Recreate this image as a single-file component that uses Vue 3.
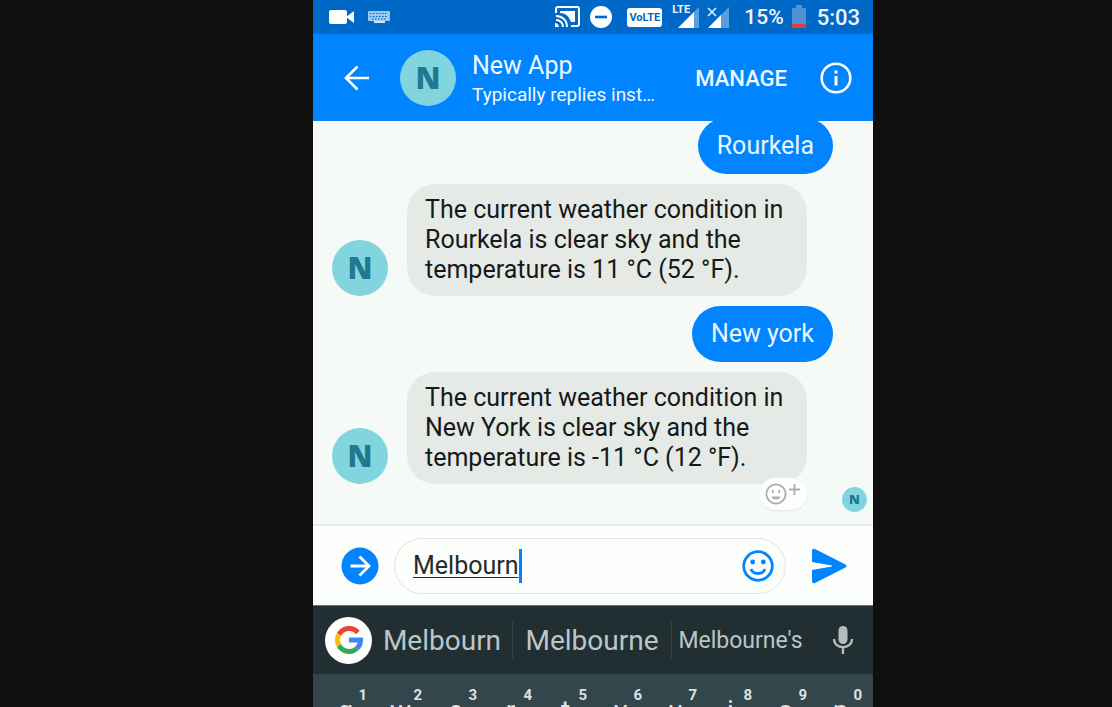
<script setup>
import { ref } from 'vue'

const draft = ref('Melbourn')
const messages = [
  { id: 1, from: 'me', lines: ['Rourkela'] },
  {
    id: 2,
    from: 'bot',
    lines: ['The current weather condition in', 'Rourkela is clear sky and the', 'temperature is 11 °C (52 °F).'],
  },
  { id: 3, from: 'me', lines: ['New york'] },
  {
    id: 4,
    from: 'bot',
    reaction: true,
    lines: ['The current weather condition in', 'New York is clear sky and the', 'temperature is -11 °C (12 °F).'],
  },
]
const keys = ['q1', 'w2', 'e3', 'r4', 't5', 'y6', 'u7', 'i8', 'o9', 'p0']
</script>

<template>
  <div class="stage">
    <main class="phone">
      <div class="status">
        <svg class="video" width="26" height="16" viewBox="0 0 26 16" fill="#fff">
          <rect x="0" y="1" width="18" height="14" rx="2" />
          <path d="M17 8l8-6v12z" />
        </svg>
        <svg class="kbd-icon" width="22" height="14" viewBox="0 0 22 14">
          <rect width="22" height="10" y="1" rx="1" fill="#9cc8ee" />
          <path d="M2 3.500h18M2 6.500h18M4 9h14" stroke="#0069c8" stroke-width="1.200" stroke-dasharray="1.500 1.500" />
          <path d="M6 12h11" stroke="#cfe6f8" stroke-width="2" />
        </svg>
        <span class="grow"></span>
        <svg class="cast" width="26" height="22" viewBox="0 0 26 22" fill="none" stroke="#fff" stroke-width="2">
          <path d="M1 7V3q0-2 2-2h19q2 0 2 2v15q0 2-2 2h-6" />
          <path d="M5 5h15v11h-4C14 10 10 7 5 7z" fill="#fff" stroke="none" />
          <path d="M1 10c6 0 11 4 11 11M1 14c4 0 7 3 7 7" />
          <path d="M0 17c2 0 4 2 4 4H0z" fill="#fff" stroke="none" />
        </svg>
        <svg class="dnd" width="24" height="24" viewBox="0 0 24 24">
          <circle cx="12" cy="12" r="11" fill="#fff" />
          <path d="M6 12h12" stroke="#0069c8" stroke-width="2.600" />
        </svg>
        <span class="volte">VoLTE</span>
        <span class="signal">
          <svg width="24" height="22" viewBox="0 0 24 22">
            <path d="M2 22L23 1v21z" fill="#5a9fdd" />
            <path d="M2 22L18 6v16z" fill="#fff" />
          </svg>
          <span class="lte">LTE</span>
        </span>
        <svg class="nosim" width="24" height="22" viewBox="0 0 24 22">
          <path d="M2 22L23 1v21z" fill="#5a9fdd" />
          <path d="M2 22L15 9v13z" fill="#fff" />
          <path d="M2 2l8 8M10 2l-8 8" stroke="#d8ebfb" stroke-width="1.600" />
        </svg>
        <span class="percent">15%</span>
        <svg class="battery" width="16" height="24" viewBox="0 0 16 24">
          <path d="M1 3h4V0h6v3h4v16H1z" fill="#4d93d6" />
          <path d="M1 19h14v4H1z" fill="#e53c35" />
        </svg>
        <span class="clock">5:03</span>
      </div>

      <header class="bar">
        <button class="icon-btn back" aria-label="Back">
          <svg width="26" height="26" viewBox="0 0 26 26" fill="none" stroke="#fff" stroke-width="2.600">
            <path d="M25 13H2M13.500 1.500L2 13l11.500 11.500" />
          </svg>
        </button>
        <span class="avatar">N</span>
        <div class="who">
          <h1>New App</h1>
          <p>Typically replies inst…</p>
        </div>
        <button class="manage">MANAGE</button>
        <button class="icon-btn" aria-label="Info">
          <svg width="32" height="32" viewBox="0 0 32 32">
            <circle cx="16" cy="16" r="14.300" fill="none" stroke="#fff" stroke-width="2.600" />
            <path d="M16 14v9.500M16 8.500v3" stroke="#fff" stroke-width="3" />
          </svg>
        </button>
      </header>

      <section class="thread">
        <div v-for="m in messages" :key="m.id" class="row" :class="m.from">
          <span v-if="m.from === 'bot'" class="avatar">N</span>
          <div class="bubble">
            <div v-for="line in m.lines" :key="line">{{ line }}</div>
            <button v-if="m.reaction" class="react" aria-label="Add reaction">
              <svg width="36" height="24" viewBox="0 0 36 24" fill="none" stroke="#a9adab" stroke-width="1.800">
                <circle cx="11" cy="13" r="9.600" />
                <path d="M6.500 15.500h9c-.8 4-8.200 4-9 0z" fill="#a9adab" stroke="none" />
                <path d="M7.800 9v3M14.200 9v3M24 8.500h11M29.500 3v11" />
              </svg>
            </button>
          </div>
        </div>
        <span class="avatar seen">N</span>
      </section>

      <form class="composer" @submit.prevent>
        <button type="button" class="icon-btn" aria-label="More actions">
          <svg width="38" height="38" viewBox="0 0 38 38">
            <circle cx="19" cy="19" r="18.500" fill="#0084ff" />
            <path d="M9.500 19H27M18.500 9.500L28 19l-9.500 9.500" fill="none" stroke="#fff" stroke-width="2.800" />
          </svg>
        </button>
        <div class="field">
          <input v-model="draft" aria-label="Message" type="text" size="8" />
          <span class="caret"></span>
          <button type="button" class="icon-btn smile" aria-label="Emoji">
            <svg width="32" height="32" viewBox="0 0 32 32" fill="none" stroke="#0084ff" stroke-width="2.800">
              <circle cx="16" cy="16" r="14.300" />
              <circle cx="10.700" cy="12" r="2.400" fill="#0084ff" stroke="none" />
              <circle cx="21.300" cy="12" r="2.400" fill="#0084ff" stroke="none" />
              <path d="M9 19c2 6 12 6 14 0" />
            </svg>
          </button>
        </div>
        <button class="icon-btn send" aria-label="Send">
          <svg width="36" height="36" viewBox="0 0 36 36" fill="#0084ff">
            <path d="M1 3Q1 0 4 1L34.500 16.500Q36.500 18 34.500 19.500L4 35Q1 36 1 33V22L21 18.500V17.500L1 14z" />
          </svg>
        </button>
      </form>

      <nav class="suggest">
        <button class="google" aria-label="Google search">
          <svg width="28" height="28" viewBox="0 0 28 28" fill="none" stroke-width="5">
            <path d="M22.800 6.500A11.500 11.500 0 0 0 4 8.500" stroke="#ea4335" />
            <path d="M4 8.500A11.500 11.500 0 0 0 4 19.500" stroke="#fbbc05" />
            <path d="M4 19.500A11.500 11.500 0 0 0 21.800 22.500" stroke="#34a853" />
            <path d="M21.800 22.500A11.500 11.500 0 0 0 25.500 14H14" stroke="#4285f4" />
          </svg>
        </button>
        <button class="word first">Melbourn</button>
        <button class="word">Melbourne</button>
        <button class="word small">Melbourne's</button>
        <button class="mic" aria-label="Voice input">
          <svg width="20" height="28" viewBox="0 0 20 28">
            <rect x="5.500" y="0" width="9" height="18" rx="4.500" fill="#b4bcbd" />
            <path d="M1 13c0 11 18 11 18 0M10 21v7" fill="none" stroke="#b4bcbd" stroke-width="2.400" />
          </svg>
        </button>
      </nav>

      <div class="keyboard">
        <button v-for="k in keys" :key="k" class="key">
          <sup>{{ k[1] }}</sup>
          <span>{{ k[0] }}</span>
        </button>
      </div>
    </main>
  </div>
</template>

<style>
body {
  margin: 0;
  background: #0f0f0f;
}
</style>

<style scoped>
.stage {
  display: grid;
  grid-template-columns: 313fr 560fr 239fr;
  height: 100vh;
  background: #0f0f0f;
  font-family: Roboto, "Liberation Sans", sans-serif;
}
.phone {
  grid-column: 2;
  display: flex;
  flex-direction: column;
  min-width: 0;
  min-height: 0;
  overflow: hidden;
  background: #f6faf7;
}
button {
  padding: 0;
  border: 0;
  background: none;
  font-family: inherit;
  color: inherit;
}
svg {
  display: block;
}
.status {
  flex: none;
  display: flex;
  align-items: center;
  height: 34px;
  padding: 0 13px 0 16px;
  background: #0069c8;
  color: #eef6fd;
}
.kbd-icon {
  margin-left: 13px;
}
.grow {
  flex: 1;
}
.dnd {
  margin-left: 8px;
}
.volte {
  margin-left: 14px;
  width: 35px;
  border-radius: 3px;
  background: #fff;
  color: #0069c8;
  font-size: 11px;
  font-weight: 700;
  line-height: 19px;
  text-align: center;
}
.signal {
  position: relative;
  margin-left: 14px;
}
.lte {
  position: absolute;
  top: -3px;
  left: -4px;
  font-size: 11px;
  font-weight: 700;
  line-height: 14px;
}
.nosim {
  margin-left: 6px;
}
.percent {
  margin-left: 14px;
  font-size: 21px;
  font-weight: 500;
}
.battery {
  margin-left: 7px;
}
.clock {
  margin-left: 10px;
  font-size: 22px;
  font-weight: 500;
}
.bar {
  flex: none;
  display: flex;
  align-items: center;
  height: 87px;
  padding: 0 21px 0 31px;
  background: #0084ff;
  color: #eff8ff;
}
.avatar {
  flex: none;
  width: 56px;
  border-radius: 50%;
  background: #82d5df;
  color: #227890;
  font-family: "Open Sans", "Noto Sans", sans-serif;
  font-size: 30px;
  font-weight: 800;
  line-height: 56px;
  text-align: center;
}
.back {
  margin-right: 30px;
}
.who {
  flex: 1;
  min-width: 0;
  margin-left: 16px;
  padding-top: 4px;
}
.who h1 {
  margin: 0;
  font-size: 25px;
  font-weight: 400;
  line-height: 30px;
}
.who p {
  margin: 0;
  font-size: 19px;
  line-height: 28px;
  white-space: nowrap;
}
.manage {
  margin-right: 33px;
  padding-top: 2px;
  font-size: 22px;
  font-weight: 500;
}
.thread {
  position: relative;
  flex: 1;
  min-height: 0;
  display: flex;
  flex-direction: column;
  justify-content: flex-end;
  gap: 10px;
  padding: 0 40px 40px 19px;
  overflow: hidden;
}
.row {
  display: flex;
  align-items: flex-end;
  gap: 19px;
}
.row.me {
  justify-content: flex-end;
}
.bubble {
  position: relative;
  padding: 11px 24px 11px 18px;
  border-radius: 28px;
  background: #e6eae7;
  color: #161918;
  font-size: 25px;
  line-height: 30px;
  white-space: nowrap;
}
.me .bubble {
  padding: 13px 19px;
  background: #0084ff;
  color: #e9f6ff;
}
.react {
  position: absolute;
  right: 0;
  bottom: -26px;
  padding: 3px 6px 5px;
  border-radius: 16px;
  background: #fdfefd;
  box-shadow: 0 1px 2px #00000014;
}
.seen {
  position: absolute;
  right: 6px;
  bottom: 12px;
  width: 25px;
  font-size: 13px;
  line-height: 25px;
}
.composer {
  flex: none;
  display: flex;
  align-items: center;
  height: 79px;
  padding: 0 26px 0 28px;
  border-top: 2px solid #e8ecea;
  background: #fcfefc;
}
.field {
  flex: 1;
  min-width: 0;
  display: flex;
  align-items: center;
  height: 54px;
  margin: 0 25px 0 15px;
  padding: 0 11px 0 18px;
  border: 1px solid #dfe3e1;
  border-radius: 28px;
}
.field input {
  field-sizing: content;
  min-width: 0;
  padding: 0;
  border: 0;
  outline: 0;
  background: none;
  color: #262a29;
  font-family: inherit;
  font-size: 25px;
  line-height: 34px;
  text-decoration: underline 1px;
  text-underline-offset: 3px;
}
.caret {
  flex: none;
  width: 3px;
  height: 34px;
  background: #0084ff;
}
.smile {
  margin-left: auto;
}
.suggest {
  flex: none;
  display: flex;
  align-items: center;
  height: 68px;
  padding: 0 20px 0 12px;
  border-top: 1px solid #69706f;
  background: #212f33;
  color: #bdc5c7;
}
.google {
  flex: none;
  display: grid;
  place-items: center;
  width: 47px;
  height: 47px;
  border-radius: 50%;
  background: #fff;
}
.word {
  flex: 158;
  height: 38px;
  border-left: 1px solid #35464b;
  font-size: 28px;
}
.word.first {
  flex: 140;
  border: 0;
}
.word.small {
  flex: 137;
  font-size: 23px;
}
.mic {
  margin-left: 24px;
}
.keyboard {
  flex: none;
  display: flex;
  height: 33px;
  padding: 0 5px;
  overflow: hidden;
  background: #33464c;
  color: #dbe2e4;
}
.key {
  flex: 1;
  display: flex;
  flex-direction: column;
  align-items: center;
  justify-content: flex-start;
  height: 74px;
}
.key sup {
  align-self: flex-end;
  margin-right: 6px;
  padding-top: 13px;
  font-size: 15px;
  font-weight: 700;
  line-height: 16px;
}
.key span {
  font-size: 28px;
  line-height: 16px;
}
</style>
